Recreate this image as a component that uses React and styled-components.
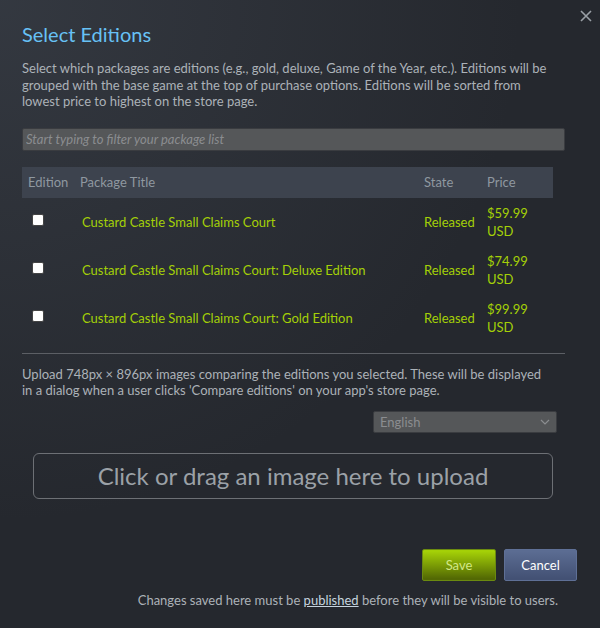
import styled, { createGlobalStyle } from "styled-components";

const GlobalStyle = createGlobalStyle`
  html, body {
    margin: 0;
    padding: 0;
    background: #25282e;
  }
  * {
    box-sizing: border-box;
  }
`

const Dialog = styled.div`
  position: relative;
  width: 600px;
  min-height: 628px;
  padding: 21px 35px 0 22px;
  background: radial-gradient(circle at top left, rgba(74, 81, 92, 0.4) 0%, rgba(75, 81, 92, 0) 60%), #25282e;
  font-family: Lato, "Liberation Sans", Arial, sans-serif;
  color: #acb2b8;
  font-size: 13px;
`

const Close = styled.button`
  position: absolute;
  top: 8px;
  right: 6px;
  width: 16px;
  height: 16px;
  padding: 0;
  border: none;
  background: none;
  cursor: pointer;
  display: flex;
  align-items: center;
  justify-content: center;
`

const Title = styled.h1`
  margin: 0;
  font-size: 20px;
  font-weight: 400;
  color: #67c1f5;
  line-height: 26px;
`

const Intro = styled.p`
  margin: 13px 0 0;
  line-height: 16.5px;
`

const FilterInput = styled.input`
  display: block;
  width: 100%;
  height: 23px;
  margin-top: 18px;
  padding: 0 3px;
  border: 1px solid #3a3c40;
  border-radius: 2px;
  background: #555759;
  font-family: inherit;
  font-size: 13px;
  font-style: italic;
  color: #ddd;
  &::placeholder {
    color: #8b8d90;
  }
`

const Table = styled.table`
  width: 531px;
  margin-top: 16px;
  border-collapse: collapse;
  table-layout: fixed;
`

const Th = styled.th`
  height: 31px;
  padding: 0 6px;
  background: #3d434e;
  text-align: left;
  font-weight: 400;
  color: #8f98a0;
  width: ${(p) => p.$width || "auto"};
`

const Td = styled.td`
  height: 48px;
  padding: 0 6px 0 ${(p) => p.$indent || "6px"};
  color: #a4d007;
  line-height: 18px;
  vertical-align: middle;
`

const Check = styled.input`
  display: block;
  width: 12px;
  height: 12px;
  margin: 0 0 4px 4px;
  appearance: none;
  background: #fff;
  border: 1px solid #444;
  border-radius: 2px;
`

const Divider = styled.hr`
  margin: 11px 0 0;
  border: none;
  border-top: 1px solid #5c5f65;
`

const UploadNote = styled.p`
  margin: 12px 0 0;
  line-height: 16.5px;
`

const LangRow = styled.div`
  display: flex;
  justify-content: flex-end;
  padding-right: 8px;
  margin-top: 12px;
`

const LangSelect = styled.div`
  width: 184px;
  height: 22px;
  display: flex;
  align-items: center;
  justify-content: space-between;
  padding: 0 6px 0 6px;
  background: #555759;
  border: 1px solid #3a3c40;
  border-radius: 2px;
  color: #8b8d90;
`

const DropZone = styled.div`
  margin: 20px 12px 0 11px;
  height: 46px;
  border: 1px solid #6d7075;
  border-radius: 6px;
  display: flex;
  align-items: center;
  justify-content: center;
  font-size: 24px;
  color: #9ba1a7;
`

const Actions = styled.div`
  display: flex;
  justify-content: flex-end;
  gap: 8px;
  margin: 50px -12px 0 0;
`

const Button = styled.button`
  height: 32px;
  width: ${(p) => p.$width};
  border-radius: 2px;
  font-family: inherit;
  font-size: 13px;
  cursor: pointer;
  border: 1px solid ${(p) => (p.$primary ? "#6b8a10" : "#5f7096")};
  background: ${(p) =>
    p.$primary
      ? "linear-gradient(to bottom, #a4d007 5%, #536904 95%)"
      : "linear-gradient(to bottom, #5b6c92 5%, #435174 95%)"};
  color: ${(p) => (p.$primary ? "#d2e885" : "#ffffff")};
`

const Footer = styled.p`
  margin: 11px 7px 0 0;
  text-align: right;
  color: #acb2b8;
  line-height: 16px;
`

const Link = styled.a`
  color: #c6d4df;
  text-decoration: underline;
`

const packages = [
  { title: "Custard Castle Small Claims Court", price: "$59.99 USD" },
  { title: "Custard Castle Small Claims Court: Deluxe Edition", price: "$74.99 USD" },
  { title: "Custard Castle Small Claims Court: Gold Edition", price: "$99.99 USD" },
];

function App() {
  return (
    <Dialog>
      <GlobalStyle />
      <Close aria-label="Close">
        <svg width="12" height="12" viewBox="0 0 12 12">
          <path d="M1 1 L11 11 M11 1 L1 11" stroke="#9aa0a6" strokeWidth="1.6" />
        </svg>
      </Close>
      <Title>Select Editions</Title>
      <Intro>
        Select which packages are editions (e.g., gold, deluxe, Game of the Year, etc.). Editions will be
        <br />
        grouped with the base game at the top of purchase options. Editions will be sorted from
        <br />
        lowest price to highest on the store page.
      </Intro>
      <FilterInput placeholder="Start typing to filter your package list" />
      <Table>
        <thead>
          <tr>
            <Th $width="52px">Edition</Th>
            <Th>Package Title</Th>
            <Th $width="63px">State</Th>
            <Th $width="72px">Price</Th>
          </tr>
        </thead>
        <tbody>
          {packages.map((p) => (
            <tr key={p.title}>
              <Td>
                <Check type="checkbox" />
              </Td>
              <Td $indent="8px">{p.title}</Td>
              <Td>Released</Td>
              <Td>{p.price}</Td>
            </tr>
          ))}
        </tbody>
      </Table>
      <Divider />
      <UploadNote>
        Upload 748px × 896px images comparing the editions you selected. These will be displayed
        <br />
        in a dialog when a user clicks 'Compare editions' on your app's store page.
      </UploadNote>
      <LangRow>
        <LangSelect>
          English
          <svg width="10" height="6" viewBox="0 0 10 6">
            <path d="M1 1 L5 5 L9 1" stroke="#8b8d90" strokeWidth="1.2" fill="none" />
          </svg>
        </LangSelect>
      </LangRow>
      <DropZone>Click or drag an image here to upload</DropZone>
      <Actions>
        <Button $primary $width="74px">Save</Button>
        <Button $width="73px">Cancel</Button>
      </Actions>
      <Footer>
        Changes saved here must be <Link href="#">published</Link> before they will be visible to users.
      </Footer>
    </Dialog>
  );
}

export default App;
